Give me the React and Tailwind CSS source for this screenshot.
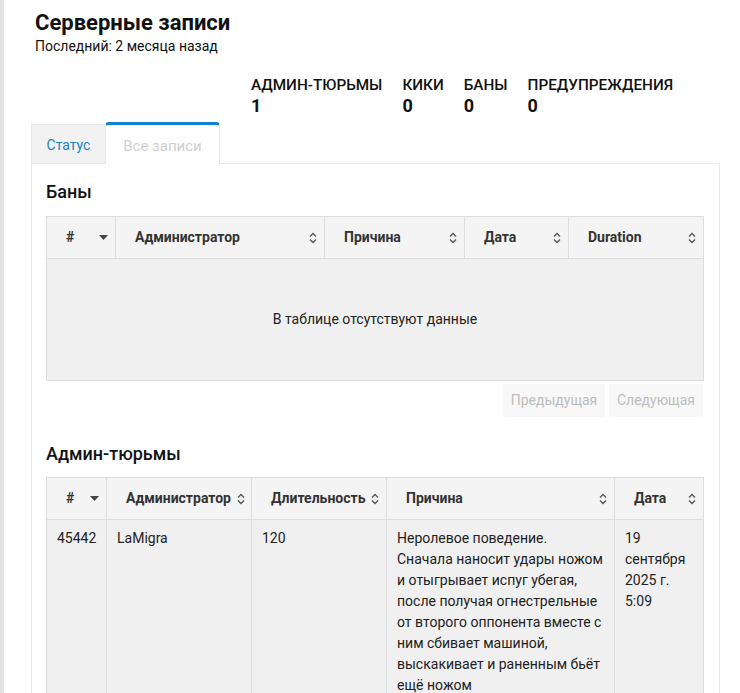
import React from "react";

function SortIcon() {
  return (
    <svg width="8" height="12" viewBox="0 0 8 12" className="shrink-0">
      <path d="M1 4.5 L4 1.5 L7 4.5" fill="none" stroke="#555" strokeWidth="1.4" />
      <path d="M1 7.5 L4 10.5 L7 7.5" fill="none" stroke="#555" strokeWidth="1.4" />
    </svg>
  );
}

function SortDesc() {
  return (
    <svg width="9" height="5" viewBox="0 0 9 5" className="shrink-0">
      <path d="M0 0 H9 L4.5 5 Z" fill="#444" />
    </svg>
  );
}

function Th({ children, desc, tight }) {
  return (
    <th className="h-[42px] border border-[#dcdde1] bg-[#f4f4f4] pl-[19px] pr-[7px] text-left align-middle text-[14px] font-bold text-[#333]">
      <div className={tight ? "flex items-center gap-[6px]" : "flex items-center justify-between"}>
        <span className="whitespace-nowrap">{children}</span>
        {desc ? <SortDesc /> : <SortIcon />}
      </div>
    </th>
  );
}

function Stat({ label, value }) {
  return (
    <div className="flex flex-col">
      <span className="text-[15.3px] font-medium leading-[20px] text-[#111]">{label}</span>
      <span className="text-[18px] font-bold leading-[22px] text-[#111]">{value}</span>
    </div>
  );
}

export default function App() {
  return (
    <div className="flex min-h-screen bg-white font-['Roboto',sans-serif] text-[#222]">
      <div className="w-[4px] shrink-0 bg-[#e3e3e3]" />
      <div className="flex-1 pl-[27px] pr-[20px]">
        <div className="pl-[4px] pt-[9px]">
          <h1 className="text-[22px] font-bold leading-[28px] text-[#111]">Серверные записи</h1>
          <p className="text-[14px] leading-[18px] text-[#111]">Последний: 2 месяца назад</p>
        </div>

        <div className="ml-[220px] mt-[20px] flex gap-[20px]">
          <Stat label="АДМИН-ТЮРЬМЫ" value="1" />
          <Stat label="КИКИ" value="0" />
          <Stat label="БАНЫ" value="0" />
          <Stat label="ПРЕДУПРЕЖДЕНИЯ" value="0" />
        </div>

        <div className="mt-[5px] flex items-end">
          <div className="flex h-[39px] w-[74px] items-center justify-center border-l border-t border-[#e8e8e8] bg-[#f2f2f2] pt-[2px] text-[14px] text-[#1c7fc4]">
            Статус
          </div>
          <div className="-mb-px flex h-[42px] w-[115px] items-center justify-center rounded-t-[4px] border-x border-t-[3px] border-x-[#e6e6e6] border-t-[#0b84d2] bg-white pt-[3px] text-[15px] text-[#cfcfcf]">
            Все записи
          </div>
        </div>

        <div className="border border-[#e8e8e8] bg-white pb-[40px] pl-[14px] pr-[15px] pt-[16px]">
          <h2 className="text-[18px] font-medium leading-[24px] text-[#111]">Баны</h2>

          <table className="mt-[12px] w-[657px] table-fixed border-collapse">
            <colgroup>
              <col className="w-[69px]" />
              <col className="w-[209px]" />
              <col className="w-[140px]" />
              <col className="w-[104px]" />
              <col className="w-[135px]" />
            </colgroup>
            <thead>
              <tr>
                <Th desc>#</Th>
                <Th>Администратор</Th>
                <Th>Причина</Th>
                <Th>Дата</Th>
                <Th>Duration</Th>
              </tr>
            </thead>
            <tbody>
              <tr>
                <td colSpan={5} className="h-[122px] border border-[#dcdde1] bg-[#f0f0f0] text-center text-[14px] text-[#222]">
                  В таблице отсутствуют данные
                </td>
              </tr>
            </tbody>
          </table>

          <div className="mt-[3px] flex w-[657px] justify-end gap-[4px]">
            <button className="h-[33px] w-[102px] rounded-[2px] bg-[#f8f8f8] text-[14px] text-[#bdbdbd]">Предыдущая</button>
            <button className="h-[33px] w-[94px] rounded-[2px] bg-[#f8f8f8] text-[14px] text-[#bdbdbd]">Следующая</button>
          </div>

          <h2 className="mt-[25px] text-[18px] font-medium leading-[24px] text-[#111]">Админ-тюрьмы</h2>

          <table className="mt-[11px] w-[657px] table-fixed border-collapse">
            <colgroup>
              <col className="w-[60px]" />
              <col className="w-[145px]" />
              <col className="w-[135px]" />
              <col className="w-[228px]" />
              <col className="w-[89px]" />
            </colgroup>
            <thead>
              <tr>
                <Th desc>#</Th>
                <Th tight>Администратор</Th>
                <Th>Длительность</Th>
                <Th>Причина</Th>
                <Th>Дата</Th>
              </tr>
            </thead>
            <tbody>
              <tr className="bg-[#f0f0f0] align-top text-[14px] leading-[21px] text-[#222]">
                <td className="border border-[#dcdde1] px-[10px] pb-[10px] pt-[8px]">45442</td>
                <td className="border border-[#dcdde1] px-[10px] pb-[10px] pt-[8px]">LaMigra</td>
                <td className="border border-[#dcdde1] px-[10px] pb-[10px] pt-[8px]">120</td>
                <td className="border border-[#dcdde1] px-[10px] pb-[10px] pt-[8px]">
                  Неролевое поведение. Сначала наносит удары ножом и отыгрывает испуг убегая, после получая огнестрельные от второго оппонента вместе с ним сбивает машиной, выскакивает и раненным бьёт ещё ножом
                </td>
                <td className="border border-[#dcdde1] px-[10px] pb-[10px] pt-[8px]">19 сентября 2025 г. 5:09</td>
              </tr>
            </tbody>
          </table>
        </div>
      </div>
    </div>
  );
}
